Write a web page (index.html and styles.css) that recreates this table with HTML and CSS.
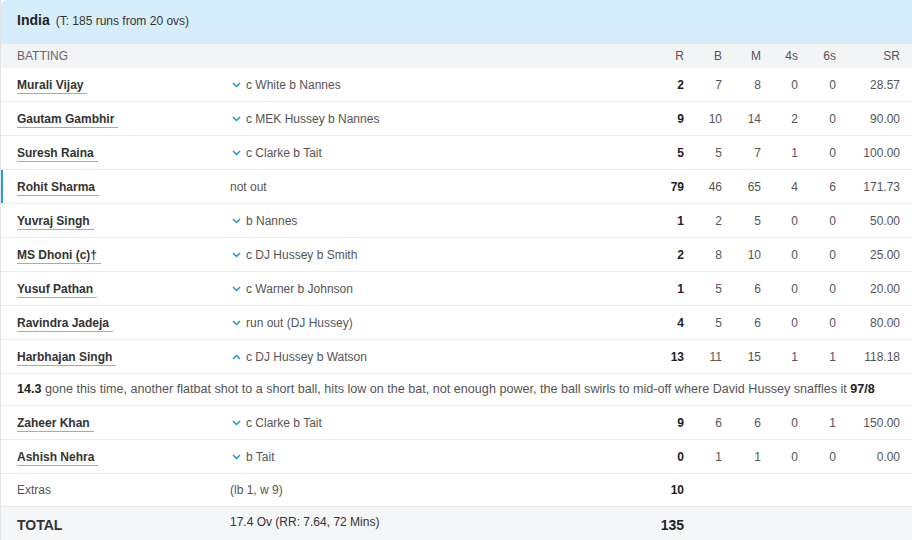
FILE: index.html
```html
<!DOCTYPE html>
<html lang="en">
<head>
  <meta charset="UTF-8" />
  <title>India Batting Scorecard</title>
  <link rel="stylesheet" href="styles.css">
</head>
<body>

<div class="card">
  <header class="innings">
    <span class="team">India</span>
    <span class="target">(T: 185 runs from 20 ovs)</span>
  </header>

  <div class="row head">
    <div class="name">BATTING</div>
    <div></div>
    <div class="num">R</div>
    <div class="num">B</div>
    <div class="num">M</div>
    <div class="num">4s</div>
    <div class="num">6s</div>
    <div class="num sr">SR</div>
  </div>

  <div id="rows"></div>

  <div class="row extras">
    <div class="name">Extras</div>
    <div class="how">(lb 1, w 9)</div>
    <div class="num runs">10</div>
  </div>

  <div class="row total">
    <div class="name">TOTAL</div>
    <div class="how">17.4 Ov (RR: 7.64, 72 Mins)</div>
    <div class="num runs">135</div>
  </div>
</div>

<script>
  const batters = [
    ['Murali Vijay', 'c White b Nannes', 2, 7, 8, 0, 0, '28.57', 'down'],
    ['Gautam Gambhir', 'c MEK Hussey b Nannes', 9, 10, 14, 2, 0, '90.00', 'down'],
    ['Suresh Raina', 'c Clarke b Tait', 5, 5, 7, 1, 0, '100.00', 'down'],
    ['Rohit Sharma', 'not out', 79, 46, 65, 4, 6, '171.73', ''],
    ['Yuvraj Singh', 'b Nannes', 1, 2, 5, 0, 0, '50.00', 'down'],
    ['MS Dhoni (c)†', 'c DJ Hussey b Smith', 2, 8, 10, 0, 0, '25.00', 'down'],
    ['Yusuf Pathan', 'c Warner b Johnson', 1, 5, 6, 0, 0, '20.00', 'down'],
    ['Ravindra Jadeja', 'run out (DJ Hussey)', 4, 5, 6, 0, 0, '80.00', 'down'],
    ['Harbhajan Singh', 'c DJ Hussey b Watson', 13, 11, 15, 1, 1, '118.18', 'up'],
    ['Zaheer Khan', 'c Clarke b Tait', 9, 6, 6, 0, 1, '150.00', 'down'],
    ['Ashish Nehra', 'b Tait', 0, 1, 1, 0, 0, '0.00', 'down']
  ];

  const chevrons = {
    down: '<svg class="chev" width="9" height="6" viewBox="0 0 9 6"><polyline points="1,1 4.5,4.5 8,1"/></svg>',
    up: '<svg class="chev" width="9" height="6" viewBox="0 0 9 6"><polyline points="1,5 4.5,1.5 8,5"/></svg>'
  };

  const list = document.getElementById('rows');

  batters.forEach(b => {
    const div = document.createElement('div');
    div.className = 'row' + (b[1] === 'not out' ? ' batting' : '');
    div.innerHTML = `
      <div class="name"><a>${b[0]}</a></div>
      <div class="how">${b[8] ? chevrons[b[8]] : ''}${b[1]}</div>
      <div class="num runs">${b[2]}</div>
      <div class="num">${b[3]}</div>
      <div class="num">${b[4]}</div>
      <div class="num">${b[5]}</div>
      <div class="num">${b[6]}</div>
      <div class="num sr">${b[7]}</div>
    `;
    list.appendChild(div);

    if (b[0] === 'Harbhajan Singh') {
      const note = document.createElement('div');
      note.className = 'comment';
      note.innerHTML = '<b>14.3</b> gone this time, another flatbat shot to a short ball, hits low on the bat, not enough power, the ball swirls to mid-off where David Hussey snaffles it <b>97/8</b>';
      list.appendChild(note);
    }
  });
</script>

</body>
</html>
```
FILE: styles.css
```css
body {
  margin: 0;
  font-family: 'Liberation Sans', Arial, sans-serif;
  font-size: 12px;
  color: #444;
  background: #fff;
}
.card {
  border-left: 1px solid #e4e4e4;
}
.innings {
  background: #d6eefb;
  height: 44px;
  padding: 0 16px;
  display: flex;
  align-items: center;
  gap: 6px;
  border-top-left-radius: 6px;
}
.team {
  font-size: 14px;
  font-weight: bold;
  color: #222;
  position: relative;
  top: -2px;
}
.target {
  font-size: 12px;
  color: #333;
  position: relative;
  top: -1px;
}
.row {
  display: grid;
  grid-template-columns: 229px 414px 40px 38px 39px 37px 38px 76px;
  align-items: center;
  height: 33px;
  border-bottom: 1px solid #ebebeb;
}
.row.head {
  height: 24px;
  background: #f3f4f6;
  border-bottom: none;
  color: #666;
}
.name {
  padding-left: 16px;
}
.name a {
  color: #333;
  font-weight: bold;
  border-bottom: 1px solid #aaa;
  padding: 0 4px 1px 0;
}
.how {
  color: #555;
  display: flex;
  align-items: center;
}
.chev {
  margin: 0 5px 0 2px;
  fill: none;
  stroke: #2196d3;
  stroke-width: 1.5;
}
.num {
  text-align: right;
  color: #555;
}
.num.runs {
  font-weight: bold;
  color: #222;
}
.num.sr {
  padding-right: 12px;
}
.row.batting {
  box-shadow: inset 2px 0 0 #2a9fd6;
}
.comment {
  height: 31px;
  line-height: 31px;
  padding-left: 16px;
  font-size: 12.6px;
  color: #555;
  border-bottom: 1px solid #ebebeb;
  white-space: nowrap;
}
.comment b {
  color: #222;
}
.row.extras {
  height: 32px;
}
.extras .name {
  color: #555;
}
.row.total {
  background: #f5f6f8;
  border-bottom: none;
  height: 34px;
}
.total .name {
  font-size: 14px;
  font-weight: bold;
  color: #333;
  padding-top: 2px;
}
.total .how {
  color: #333;
  margin-top: -4px;
}
.total .runs {
  font-size: 14px;
  padding-top: 2px;
}
```
